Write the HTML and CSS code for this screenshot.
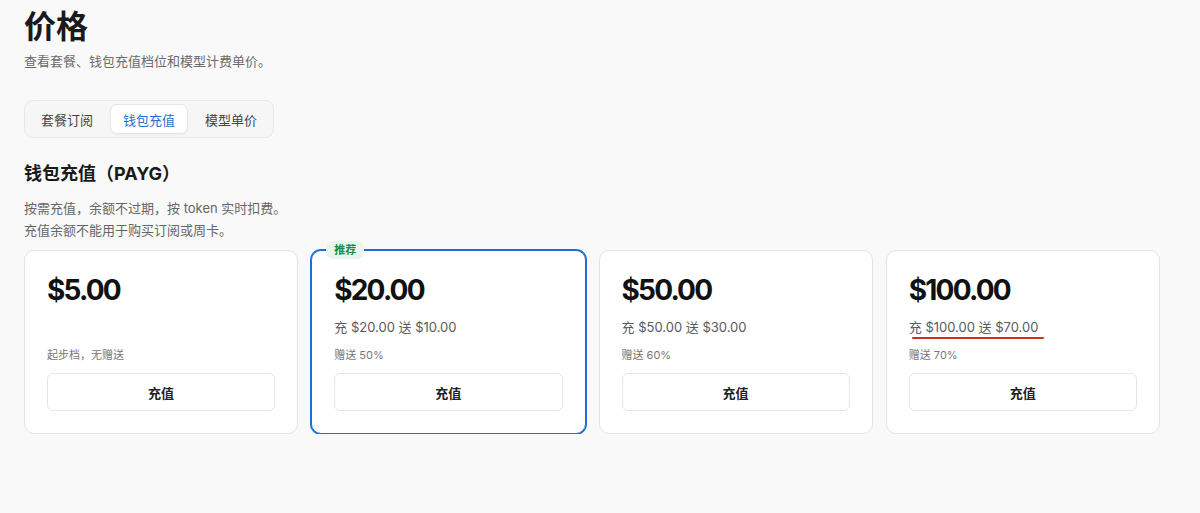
FILE: index.html
```html
<!DOCTYPE html>
<html lang="zh-CN">
<head>
    <meta charset="UTF-8">
    <meta name="viewport" content="width=device-width, initial-scale=1.0">
    <title>价格</title>
    <link rel="stylesheet" href="styles.css">
</head>
<body>
    <div class="page">
        <h1 class="title">价格</h1>
        <p class="subtitle">查看套餐、钱包充值档位和模型计费单价。</p>

        <div class="tabs">
            <button class="tab">套餐订阅</button>
            <button class="tab active">钱包充值</button>
            <button class="tab">模型单价</button>
        </div>

        <h2 class="section-title">钱包充值（PAYG）</h2>
        <p class="desc">按需充值，余额不过期，按 token 实时扣费。<br>充值余额不能用于购买订阅或周卡。</p>

        <div class="plans">
            <div class="plan">
                <div class="price">$5.00</div>
                <div class="detail"></div>
                <div class="note">起步档，无赠送</div>
                <button class="topup">充值</button>
            </div>
            <div class="plan featured">
                <span class="badge">推荐</span>
                <div class="price">$20.00</div>
                <div class="detail">充 $20.00 送 $10.00</div>
                <div class="note">赠送 50%</div>
                <button class="topup">充值</button>
            </div>
            <div class="plan">
                <div class="price">$50.00</div>
                <div class="detail">充 $50.00 送 $30.00</div>
                <div class="note">赠送 60%</div>
                <button class="topup">充值</button>
            </div>
            <div class="plan">
                <div class="price">$100.00</div>
                <div class="detail"><span class="marked">充 $100.00 送 $70.00</span></div>
                <div class="note">赠送 70%</div>
                <button class="topup">充值</button>
            </div>
        </div>
    </div>
</body>
</html>
```

FILE: styles.css
```css
body {
    margin: 0;
    background-color: #f9f9f9;
    font-family: Inter, 'Noto Sans CJK SC', sans-serif;
    color: #1a1a1a;
}

.page {
    width: 1136px;
    padding: 7px 24px 0;
}

.title {
    margin: 0;
    font-size: 32px;
    line-height: 40px;
    font-weight: 700;
}

.subtitle {
    margin: 4px 0 0;
    font-size: 13px;
    line-height: 20px;
    color: #6b6b6b;
}

.tabs {
    display: inline-flex;
    gap: 4px;
    margin-top: 29px;
    padding: 3px;
    background-color: #f6f6f6;
    border: 1px solid #e8e8e8;
    border-radius: 9px;
}

.tab {
    height: 30px;
    padding: 0 12px;
    border: 1px solid transparent;
    border-radius: 7px;
    background: none;
    font-family: inherit;
    font-size: 13px;
    color: #444;
    cursor: pointer;
}

.tab.active {
    background-color: white;
    border-color: #e6e6e6;
    color: #1f6fd1;
    box-shadow: 0 1px 2px rgba(0, 0, 0, 0.04);
}

.section-title {
    margin: 23px 0 0;
    font-size: 18px;
    line-height: 26px;
    font-weight: 700;
}

.desc {
    margin: 10px 0 0;
    font-size: 13px;
    line-height: 22px;
    color: #666;
}

.plans {
    display: grid;
    grid-template-columns: repeat(4, 1fr);
    gap: 13px;
    margin-top: 9px;
}

.plan {
    position: relative;
    display: flex;
    flex-direction: column;
    padding: 21px 22px 22px;
    background-color: white;
    border: 1px solid #e4e4e4;
    border-radius: 10px;
}

.plan.featured {
    border-color: #1f6fd1;
    box-shadow: 0 0 0 1px #1f6fd1;
}

.badge {
    position: absolute;
    top: -10px;
    left: 14px;
    padding: 0 8px;
    height: 18px;
    line-height: 18px;
    font-size: 11px;
    font-weight: 700;
    color: #1c8a3f;
    background-color: #e9f6ed;
    border-radius: 7px;
}

.price {
    font-size: 28px;
    line-height: 36px;
    font-weight: 700;
    letter-spacing: -1.8px;
    color: #111;
}

.detail {
    margin-top: 9px;
    height: 20px;
    font-size: 13px;
    line-height: 20px;
    color: #5a5a5a;
}

.marked {
    position: relative;
}

.marked::after {
    content: "";
    position: absolute;
    left: 3px;
    right: -6px;
    bottom: -4px;
    height: 2px;
    border-radius: 1px;
    background-color: #c8331f;
}

.note {
    margin-top: 9px;
    font-size: 11px;
    line-height: 18px;
    color: #777;
}

.topup {
    margin-top: 9px;
    height: 38px;
    background-color: white;
    border: 1px solid #e6e6e6;
    border-radius: 6px;
    font-family: inherit;
    font-size: 13px;
    font-weight: 700;
    color: #222;
    cursor: pointer;
}
```
